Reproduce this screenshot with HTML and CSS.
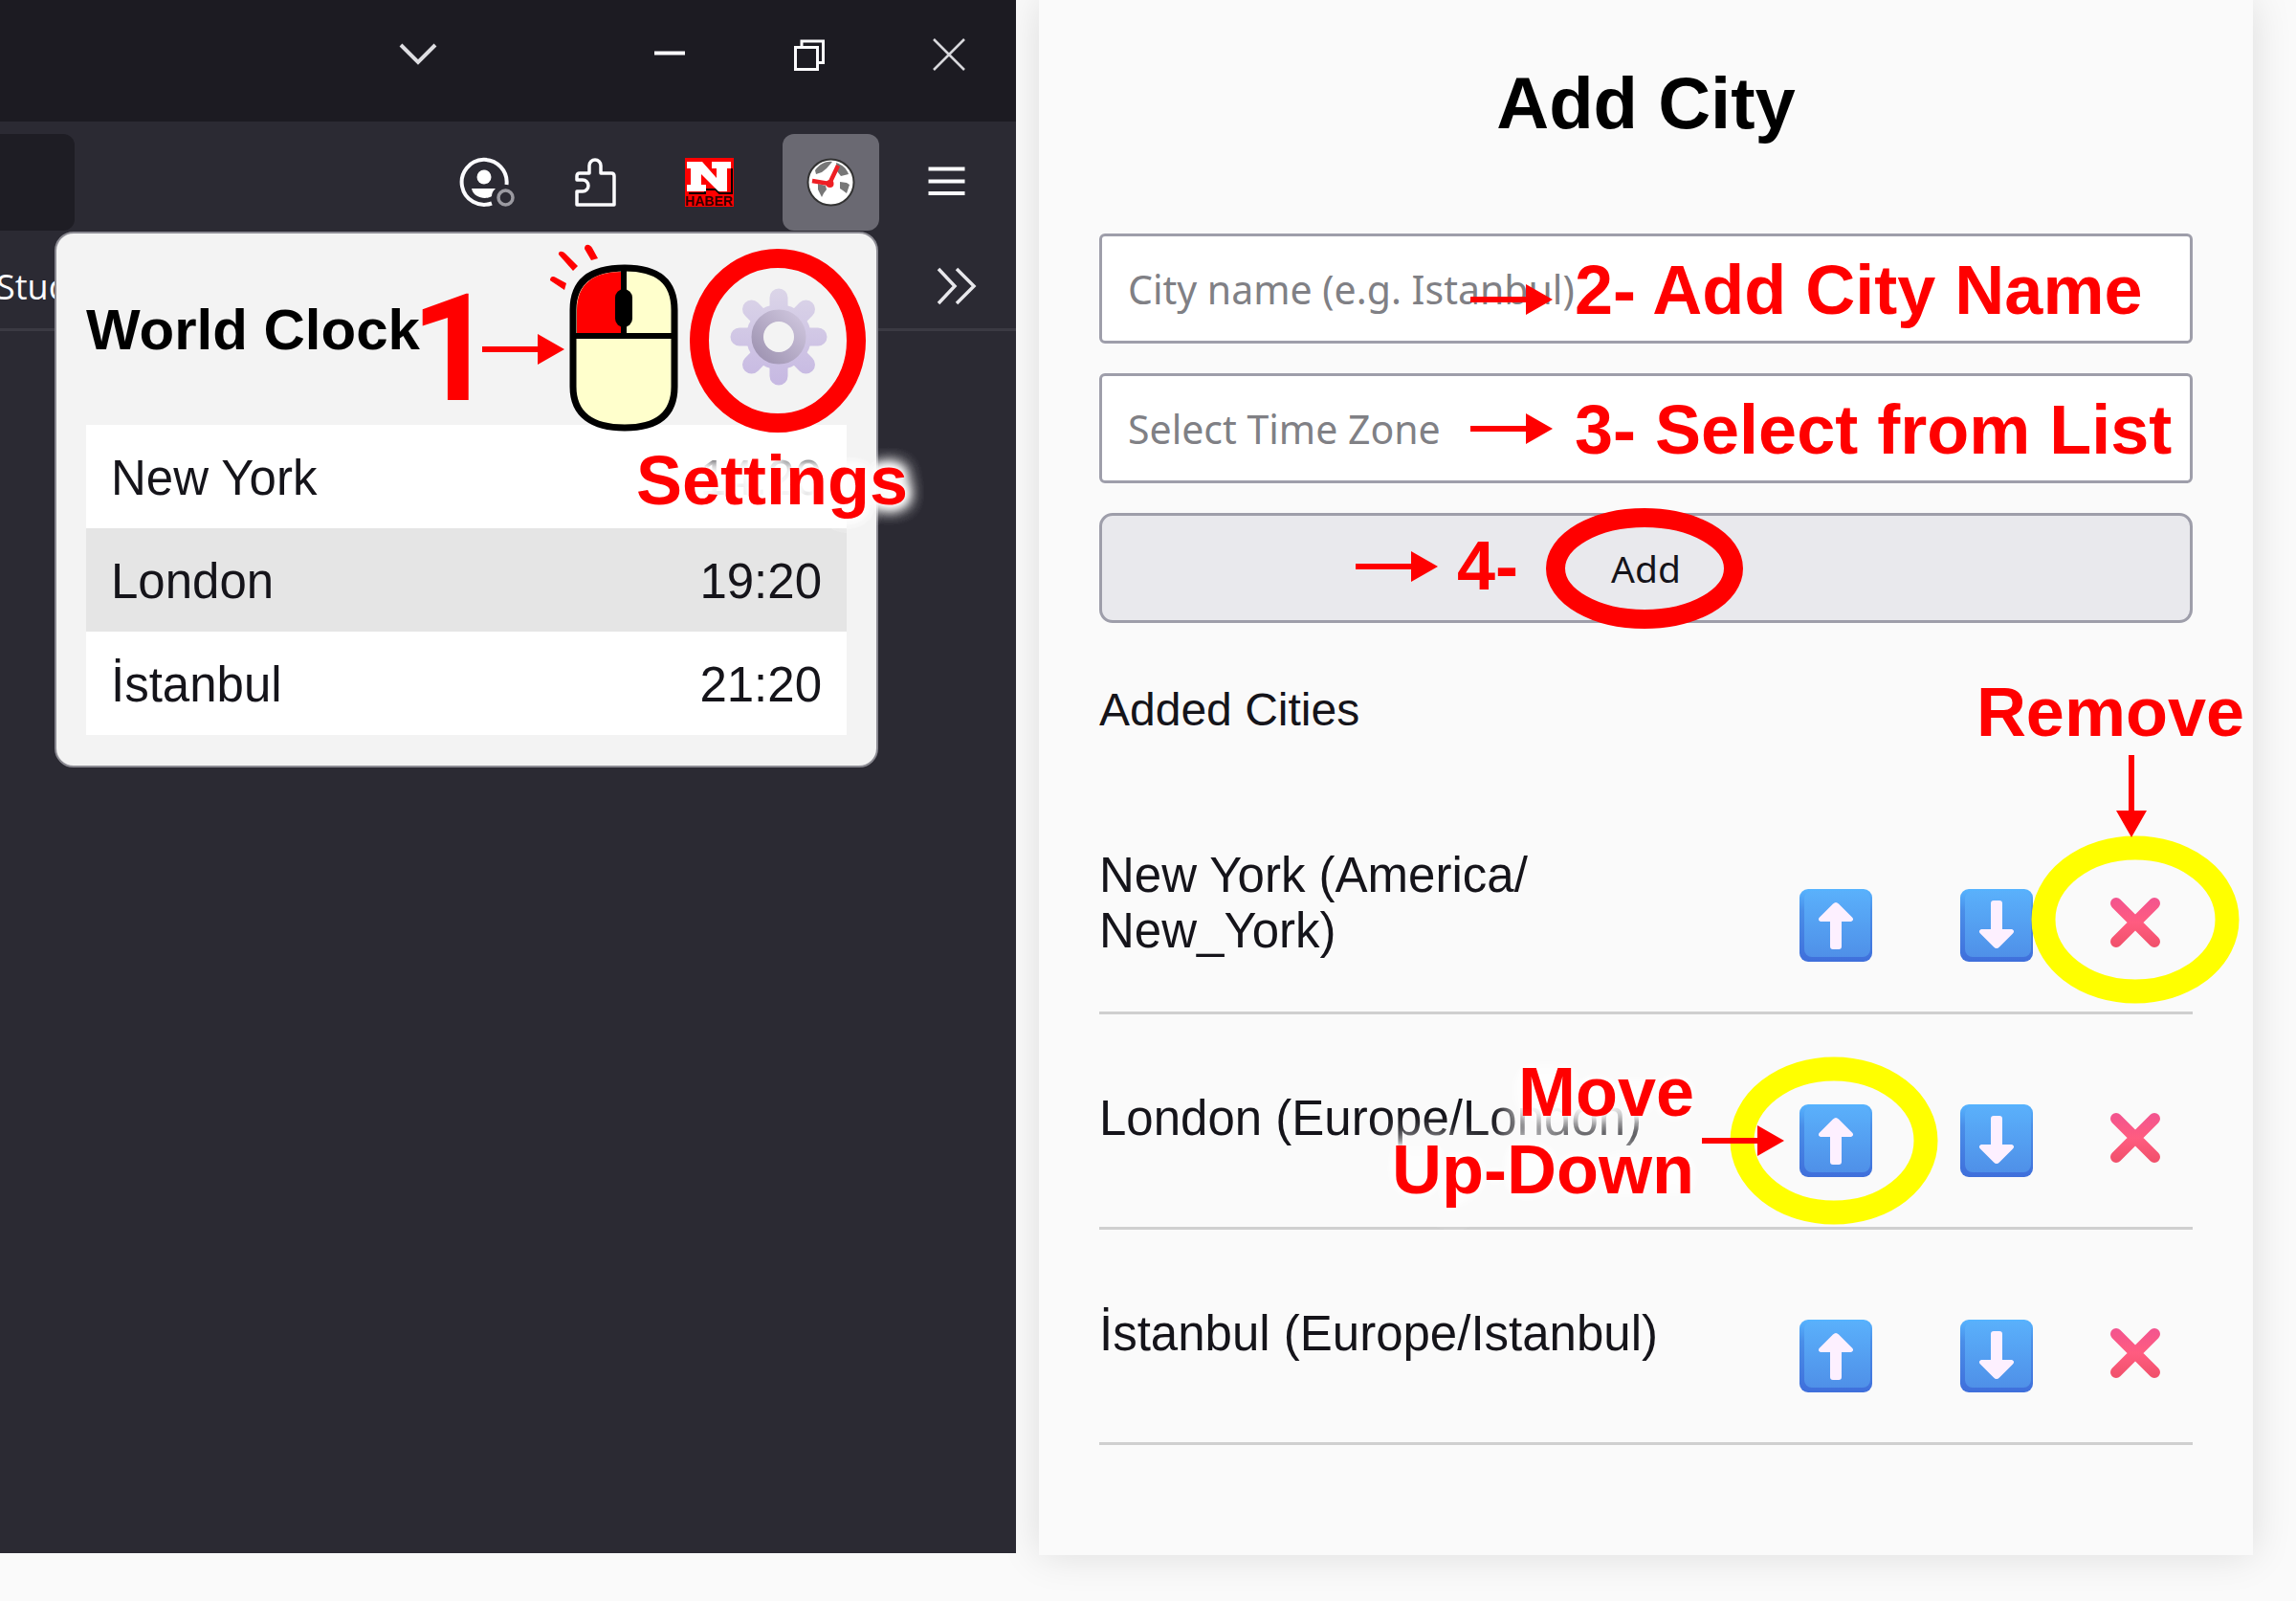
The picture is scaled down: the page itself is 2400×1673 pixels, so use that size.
FILE: index.html
```html
<!DOCTYPE html>
<html lang="en">
<head>
<meta charset="utf-8">
<title>World Clock guide</title>
<link rel="stylesheet" href="styles.css">
</head>
<body>
<svg class="defs" aria-hidden="true">
  <defs>
    <linearGradient id="blue" x1="0" y1="0" x2="0" y2="1"><stop offset="0" stop-color="#5ab0fb"/><stop offset="1" stop-color="#4f90e8"/></linearGradient>
    <linearGradient id="edge" x1="0" y1="0" x2="0" y2="1"><stop offset="0" stop-color="#56b4ff"/><stop offset="0.3" stop-color="#4a8ee8"/><stop offset="1" stop-color="#3f6fdb"/></linearGradient>
    <linearGradient id="pink" gradientUnits="userSpaceOnUse" x1="0" y1="0" x2="0" y2="52"><stop offset="0" stop-color="#f2548f"/><stop offset="0.5" stop-color="#ff5c80"/><stop offset="1" stop-color="#f0506a"/></linearGradient>
    <linearGradient id="tooth" gradientUnits="userSpaceOnUse" x1="0" y1="-50" x2="0" y2="50"><stop offset="0" stop-color="#dbd5e8"/><stop offset="1" stop-color="#c6b8e2"/></linearGradient>
    <linearGradient id="hub" x1="1" y1="0" x2="0" y2="1"><stop offset="0" stop-color="#cdc4dc"/><stop offset="1" stop-color="#9f94b2"/></linearGradient>
    <symbol id="arrow" viewBox="0 0 86 32"><path d="M0 13h58V0l28 16-28 16V19H0z" fill="#f00"/></symbol>
    <symbol id="up" viewBox="0 0 76 76"><rect width="76" height="76" rx="9" fill="url(#edge)"/><rect x="5" y="2" width="69" height="69" rx="8" fill="url(#blue)"/><path d="M38 14c1 0 2 .5 3 1.500l14 14c2 2 1 4.500-2 4.500h-9v26c0 2-1 3-3 3h-6c-2 0-3-1-3-3V34h-9c-3 0-4-2.500-2-4.500l14-14c1-1 2-1.500 3-1.500z" fill="#fdf0ff"/></symbol>
    <symbol id="down" viewBox="0 0 76 76"><rect width="76" height="76" rx="9" fill="url(#edge)"/><rect x="5" y="2" width="69" height="69" rx="8" fill="url(#blue)"/><path d="M38 62c1 0 2-.5 3-1.500l14-14c2-2 1-4.500-2-4.500h-9V15c0-2-1-3-3-3h-6c-2 0-3 1-3 3v27h-9c-3 0-4 2.500-2 4.500l14 14c1 1 2 1.500 3 1.500z" fill="#fdf0ff"/></symbol>
    <symbol id="cross" viewBox="0 0 52 52"><path d="M6 6l40 40M46 6L6 46" stroke="url(#pink)" stroke-width="12" stroke-linecap="round"/></symbol>
  </defs>
</svg>
<main class="page">
  <section class="browser">
    <div class="titlebar">
      <button class="plain tabs" aria-label="List all tabs"><svg width="40" height="40" viewBox="0 0 40 40"><path d="M2 10l18 18 18-18" fill="none" stroke="#dedee2" stroke-width="4"/></svg></button>
      <button class="plain" aria-label="Minimize"><svg width="40" height="40" viewBox="0 0 40 40"><path d="M4 18.500h32" stroke="#fbfbfe" stroke-width="4"/></svg></button>
      <button class="plain" aria-label="Restore"><svg width="40" height="40" viewBox="0 0 40 40"><path d="M5.500 12.500h23v23h-23zM12 12V6h22.500v22.500H29" fill="none" stroke="#fbfbfe" stroke-width="3"/></svg></button>
      <button class="plain" aria-label="Close"><svg width="40" height="40" viewBox="0 0 40 40"><path d="M4 4l32 32M36 4L4 36" stroke="#d8d8dc" stroke-width="2.500"/></svg></button>
    </div>
    <div class="toolbar">
      <div class="urlbar"></div>
      <div class="tools">
        <button class="tool" aria-label="Account"><svg class="spill" width="51" height="51" viewBox="1 0 51 51"><path d="M48.500 28A23.500 23.500 0 1 0 33 47.500" fill="none" stroke="#fbfbfe" stroke-width="4"/><circle cx="25" cy="20" r="7.500" fill="#fff"/><path d="M12 32h25c-3 3-4 5-4 8-6 4-19 2-21-8z" fill="#fff"/><circle cx="47.500" cy="41.500" r="7.500" fill="none" stroke="#9b9aa1" stroke-width="3.500"/></svg></button>
        <button class="tool" aria-label="Extensions"><svg width="51" height="51" viewBox="2 0 51 51"><path d="M19 16V8a6 6 0 0 1 12 0v8h11q3 0 3 3v30H6V35h6a6 6 0 0 0 0-12H6v-4q0-3 3-3z" fill="none" stroke="#fbfbfe" stroke-width="3.500" stroke-linejoin="round"/></svg></button>
        <button class="tool news" aria-label="N Haber"><svg width="51" height="51" viewBox="0 0 51 51"><path d="M0 0h51v51H0z" fill="#f00"/><path d="M4 37h17v-4h11l4 4h13V11" fill="none" stroke="#000" stroke-width="2"/><path d="M2 4h16l15 17V11h-5V4h20v7h-4v24h-9L17 17v11h5v7H2v-7h4V11H2z" fill="#fff"/><text x="25" y="50" text-anchor="middle" class="haber">HABER</text></svg></button>
        <button class="tool active" aria-label="World Clock"><svg width="51" height="51" viewBox="0 0 51 51"><circle cx="25.500" cy="25.500" r="24" fill="#fff" stroke="#333" stroke-width="2"/><path d="M9 13c5-7 12-10 18-9l-6 7-5 4-6 2zM31 5c6 2 11 6 13 12l-8 2-4-5zM12 27l8 2 1 4-3 4-2 4-4-8zM35 25l7 1 3 2-3 9-4-3-3-2z" fill="#777"/><path d="M6 24l18 3 9-19" fill="none" stroke="#ee1f24" stroke-width="4.500"/><circle cx="24.500" cy="27" r="4" fill="#ee1f24"/></svg></button>
        <button class="tool" aria-label="Menu"><svg width="51" height="51" viewBox="0 0 51 51"><path d="M6.500 11.500h38M6.500 24.500h38M6.500 37h38" stroke="#fbfbfe" stroke-width="4"/></svg></button>
      </div>
    </div>
    <div class="bookmarks">
      <a class="bookmark" href="#">Stud</a>
      <button class="plain" aria-label="More bookmarks"><svg width="44" height="40" viewBox="0 0 44 40"><path d="M3 2l17 18L3 38M22 2l18 18-18 18" fill="none" stroke="#e8e8ec" stroke-width="3.500"/></svg></button>
    </div>

    <div class="popup">
      <header class="popup-head">
        <h1 class="popup-title">World Clock</h1>
        <button class="plain" aria-label="Settings"><svg width="102" height="102" viewBox="-51 -51 102 102"><g stroke="url(#tooth)" stroke-width="19" stroke-linecap="round"><path d="M.01-41L0 41M-41 .01L41 0M-28.500-29l57 58M28.500-29l-57 58"/></g><circle r="34" fill="url(#tooth)"/><circle r="22" fill="none" stroke="url(#hub)" stroke-width="13"/><circle r="16" fill="#f3f3f3"/></svg></button>
      </header>
      <table class="clocks">
        <tr><td>New York</td><td class="time">14:20</td></tr>
        <tr><td>London</td><td class="time">19:20</td></tr>
        <tr><td>İstanbul</td><td class="time">21:20</td></tr>
      </table>
      <span class="note step-one">1</span>
      <svg class="note arrow-one" width="86" height="32"><use href="#arrow"/></svg>
      <svg class="note mouse" width="136" height="198" viewBox="573 254 136 198">
        <path d="M599 350V324c0-30 19-44 54-44s52 14 52 44v80c0 30-19 43-52 43s-54-13-54-43z" fill="#ffc" stroke="#000" stroke-width="7"/>
        <path d="M603 348v-24c0-27 17-40 47-40v64z" fill="#f00"/>
        <path d="M600 351h105M652 281v70" stroke="#000" stroke-width="6"/>
        <rect x="643" y="302" width="18" height="40" rx="9"/>
        <g fill="#f00"><path d="M584 266c-1-3 3-5 7-1l13 13-5 5z"/><path d="M611 260c0-6 6-5 8-1l6 11-7 2z"/><path d="M575 293c0-4 3-5 6-3l11 6-2 7z"/></g>
      </svg>
      <svg class="note ring-one" width="184" height="192"><ellipse cx="92" cy="96" rx="82" ry="86" fill="none" stroke="#f00" stroke-width="20"/></svg>
      <span class="note settings-note">Settings</span>
    </div>
  </section>

  <section class="card">
    <h2 class="card-title">Add City</h2>
    <form class="form">
      <div class="field">
        <label class="hidden" for="city">City name</label>
        <input id="city" class="control" type="text" placeholder="City name (e.g. Istanbul)">
        <span class="note field-note"><svg width="86" height="32"><use href="#arrow"/></svg></span>
        <span class="note field-text">2- Add City Name</span>
      </div>
      <div class="field">
        <label class="hidden" for="zone">Time zone</label>
        <input id="zone" class="control" type="text" placeholder="Select Time Zone">
        <span class="note field-note zone-arrow"><svg width="86" height="32"><use href="#arrow"/></svg></span>
        <span class="note field-text">3- Select from List</span>
      </div>
      <div class="field">
        <button class="control add" type="button">Add</button>
        <span class="note add-note"><svg width="86" height="32"><use href="#arrow"/></svg>4-</span>
        <svg class="note add-ring" width="206" height="126"><ellipse cx="103" cy="63" rx="93" ry="53" fill="none" stroke="#f00" stroke-width="20"/></svg>
      </div>
    </form>
    <p class="subtitle">Added Cities</p>
    <ul class="cities">
      <li class="city">
        <span class="name">New York (America/<wbr>New_York)</span>
        <span class="actions"><button class="plain" aria-label="Move up"><svg width="76" height="76"><use href="#up"/></svg></button><button class="plain" aria-label="Move down"><svg width="76" height="76"><use href="#down"/></svg></button><button class="plain remove" aria-label="Remove"><svg width="52" height="52"><use href="#cross"/></svg></button></span>
        <svg class="note remove-ring" width="218" height="176"><ellipse cx="109" cy="88" rx="96" ry="75" fill="none" stroke="#ff0" stroke-width="25"/></svg>
        <svg class="note remove-arrow" width="32" height="86" viewBox="0 0 32 86"><path d="M13 0v58H0l16 28 16-28H19V0z" fill="#f00"/></svg>
        <span class="note remove-note">Remove</span>
      </li>
      <li class="city">
        <span class="name">London (Europe/London)</span>
        <span class="actions"><button class="plain" aria-label="Move up"><svg width="76" height="76"><use href="#up"/></svg></button><button class="plain" aria-label="Move down"><svg width="76" height="76"><use href="#down"/></svg></button><button class="plain remove" aria-label="Remove"><svg width="52" height="52"><use href="#cross"/></svg></button></span>
        <span class="note move-note">Move<br>Up-Down</span>
        <svg class="note move-ring" width="218" height="176"><ellipse cx="109" cy="88" rx="96" ry="75" fill="none" stroke="#ff0" stroke-width="25"/></svg>
        <svg class="note move-arrow" width="86" height="32"><use href="#arrow"/></svg>
      </li>
      <li class="city">
        <span class="name">İstanbul (Europe/Istanbul)</span>
        <span class="actions"><button class="plain" aria-label="Move up"><svg width="76" height="76"><use href="#up"/></svg></button><button class="plain" aria-label="Move down"><svg width="76" height="76"><use href="#down"/></svg></button><button class="plain remove" aria-label="Remove"><svg width="52" height="52"><use href="#cross"/></svg></button></span>
      </li>
    </ul>
  </section>
</main>
</body>
</html>
```
FILE: styles.css
```css
* { box-sizing: border-box; }
body {
  margin: 0;
  background: #fafafa;
  color: #15141a;
  font-family: "Liberation Sans", Arial, sans-serif;
  font-size: 51px;
}
svg { display: block; }
.defs { position: absolute; width: 0; height: 0; }
.page {
  display: grid;
  grid-template-columns: 1062fr 1269fr;
  column-gap: 24px;
  padding: 0 45px 48px 0;
}
.plain, .tool {
  padding: 0;
  border: 0;
  background: none;
}
.hidden {
  position: absolute;
  width: 1px;
  height: 1px;
  overflow: hidden;
  clip-path: inset(50%);
}

/* Browser window */
.browser {
  position: relative;
  z-index: 1;
  margin-bottom: 2px;
  background: #2b2a33;
}
.titlebar {
  display: flex;
  justify-content: flex-end;
  gap: 106px;
  height: 127px;
  padding: 37px 50px 0 0;
  background: #1c1b22;
}
.titlebar .plain { height: 40px; }
.tabs { margin-right: 117px; }
.toolbar {
  display: flex;
  justify-content: space-between;
  padding: 13px 22px 0 0;
}
.urlbar {
  width: 78px;
  height: 101px;
  border-radius: 0 12px 12px 0;
  background: #1e1d24;
}
.tools { display: flex; gap: 16px; }
.tool {
  display: grid;
  place-items: center;
  width: 101px;
  height: 101px;
  border-radius: 12px;
}
.spill { overflow: visible; }
.news { margin-right: 10px; }
.active { margin-right: 4px; background: #6a6972; }
.haber { font: bold 14px "Liberation Sans", Arial, sans-serif; fill: #300; }
.bookmarks {
  display: flex;
  align-items: center;
  justify-content: space-between;
  height: 105px;
  padding: 14px 40px 0 0;
  border-bottom: 3px solid #3b3a43;
}
.bookmark {
  color: #fbfbfe;
  font: 36px "Open Sans", sans-serif;
  text-decoration: none;
  margin-left: -4px;
}

/* Extension popup */
.popup {
  position: absolute;
  top: 242px;
  left: 57px;
  right: 144px;
  padding: 0 31px 32px;
  border: 2px solid #8b8a92;
  border-radius: 20px;
  background: #f3f3f3;
}
.popup-head {
  display: flex;
  align-items: center;
  justify-content: space-between;
  height: 200px;
  padding-right: 20px;
}
.popup-head .plain { margin-top: 16px; }
.popup-title { margin: 0; color: #000; font-size: 60px; }
.clocks { width: 100%; border-collapse: collapse; background: #fff; }
.clocks tr:nth-child(2) { background: #e5e5e5; }
.clocks td { height: 108px; padding: 2px 26px 0; }
.clocks .time { text-align: right; }

/* Guide annotations */
.note {
  position: absolute;
  color: #f00;
  font-size: 72px;
  font-weight: bold;
  line-height: 81px;
  white-space: nowrap;
  pointer-events: none;
}
.step-one { top: 41px; left: 370px; font: bold 155px/160px Roboto, sans-serif; }
.arrow-one { top: 105px; left: 445px; }
.mouse { top: 10px; left: 514px; }
.ring-one { top: 16px; right: 11px; }
.settings-note {
  top: 218px;
  right: -33px;
  text-shadow: 0 0 3px #fff, 0 0 8px #fff, 0 0 14px #fff, 0 0 14px #fff, 0 0 20px #fff, 0 0 20px #fff, 0 0 20px #fff, 0 0 20px #fff;
}

/* Settings card */
.card {
  padding: 65px 63px 115px;
  background: #fafafa;
  box-shadow: 0 0 40px rgba(0, 0, 0, 0.12);
}
.card-title {
  margin: 0 0 94px;
  color: #000;
  font-size: 76px;
  line-height: 85px;
  text-align: center;
}
.form { display: grid; gap: 31px; }
.field { position: relative; }
.control {
  display: block;
  width: 100%;
  height: 115px;
  padding: 0 27px;
  border: 3px solid #9e9eaa;
  border-radius: 6px;
  background: #fff;
  color: #15141a;
  font: 41px "Noto Sans", sans-serif;
}
.control::placeholder { color: #808085; opacity: 1; }
.add { border-radius: 14px; background: #e9e9ed; font-size: 39px; }
.field-note { top: 53px; right: 669px; }
.zone-arrow { top: 42px; }
.field-text { top: 19px; left: 497px; }
.add-note {
  top: 15px;
  right: 705px;
  display: flex;
  align-items: center;
  gap: 20px;
}
.add-ring { top: -5px; right: 470px; }
.subtitle { margin: 64px 0 66px; font-size: 48px; line-height: 54px; }
.cities { margin: 0; padding: 0; list-style: none; }
.city {
  position: relative;
  display: flex;
  align-items: center;
  justify-content: space-between;
  height: 225px;
  padding: 0 34px 0 0;
  border-bottom: 3px solid #cfcfcf;
}
.name { width: 600px; padding-bottom: 4px; line-height: 58px; }
.actions { display: flex; align-items: center; padding-top: 41px; }
.actions .plain { margin-right: 92px; }
.actions .remove { margin: 0 0 6px -11px; }
.remove-ring { top: 38px; right: -49px; }
.remove-arrow { top: -46px; right: 48px; }
.remove-note { top: -131px; right: -54px; }
.move-ring { top: 44px; right: 266px; }
.move-arrow { top: 116px; right: 427px; }
.move-note {
  top: 41px;
  right: 521px;
  text-align: right;
  text-shadow: 0 0 4px #fff, 0 0 12px #fff, 0 0 20px #fff, 0 0 30px #fff, 0 0 30px #fff, 0 0 36px #fff, 0 0 36px #fff, 0 0 36px #fff;
}
```
